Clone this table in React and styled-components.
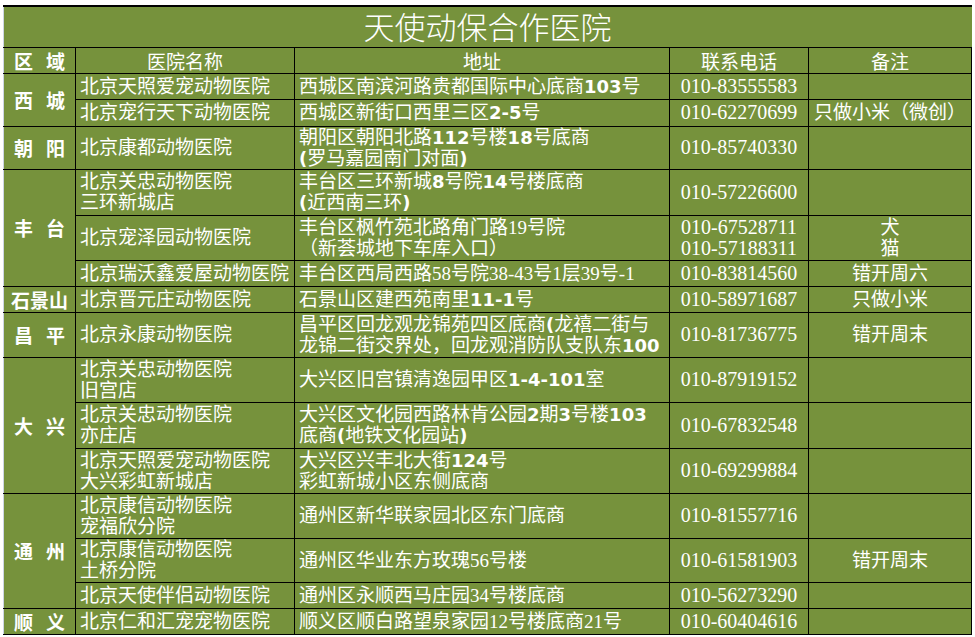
import React from "react";
import styled, { createGlobalStyle } from "styled-components";

const GlobalStyle = createGlobalStyle`
  html, body {
    margin: 0;
    padding: 0;
    background: #fff;
  }
  body {
    width: 975px;
    height: 637px;
    overflow: hidden;
  }
`;

const GREEN = "#76923c";
const GRID = "#cdd5e4";

const Sheet = styled.div`
  padding: 5px 0 0 3px;
  font-family: "Liberation Serif", "Noto Sans CJK SC", serif;
  font-size: 19px;
  color: #fff;
`;

const Table = styled.table`
  border-collapse: collapse;
  table-layout: fixed;
  width: 968px;
  background: ${GREEN};
`;

const Row = styled.tr`
  height: ${(p) => p.$h}px;
`;

const Cell = styled.td`
  border: 1px solid #000;
  padding: 0 4px;
  vertical-align: middle;
  text-align: ${(p) => p.$align || "left"};
  line-height: 21px;
  overflow: hidden;
  white-space: nowrap;
`;

const TitleCell = styled.td`
  border-top: 2px solid #000;
  border-bottom: 1px solid #000;
  border-left: 1px solid ${GRID};
  border-right: 1px solid ${GREEN};
  padding: 0 0 2px;
  text-align: center;
  vertical-align: middle;
  font-family: "Noto Sans CJK SC", sans-serif;
  font-size: 31px;
  font-weight: 300;
  line-height: 30px;
`;

const HeadCell = styled(Cell)`
  text-align: center;
  font-family: "Noto Sans CJK SC", sans-serif;
`;

const RegionCell = styled(Cell)`
  border-left: 1px solid ${GRID};
  padding: 0;
  font-family: "Noto Sans CJK SC", sans-serif;
  font-weight: 700;
`;

// 两字区域名中间留空，三字区域名紧排
const RegionLabel = styled.div`
  display: flex;
  justify-content: center;
  gap: ${(p) => (p.$spaced ? "13px" : "0")};
`;

const Line = styled.div`
  white-space: nowrap;
  overflow: hidden;
`;

const Bold = styled.span`
  font-family: "DejaVu Sans", sans-serif;
  font-weight: 700;
  font-size: 18px;
`;

const Phone = styled.div`
  font-size: 20px;
  line-height: 21px;
`;

const Rich = ({ text }) =>
  text
    .split(/(\{[^}]*\})/)
    .filter(Boolean)
    .map((s, i) =>
      s.startsWith("{") ? (
        <Bold key={i}>{s.slice(1, -1)}</Bold>
      ) : (
        <React.Fragment key={i}>{s}</React.Fragment>
      )
    );

const Region = ({ name }) => (
  <RegionLabel $spaced={name.length === 2}>
    {[...name].map((c, i) => (
      <span key={i}>{c}</span>
    ))}
  </RegionLabel>
);

// 区域 → 医院列表
const districts = [
  {
    name: "西城",
    rows: [
      { h: 26, name: ["北京天照爱宠动物医院"], addr: ["西城区南滨河路贵都国际中心底商{103}号"], phone: ["010-83555583"], note: [] },
      { h: 27, name: ["北京宠行天下动物医院"], addr: ["西城区新街口西里三区{2-5}号"], phone: ["010-62270699"], note: ["只做小米（微创）"] },
    ],
  },
  {
    name: "朝阳",
    rows: [
      { h: 43, name: ["北京康都动物医院"], addr: ["朝阳区朝阳北路{112}号楼{18}号底商", "{(}罗马嘉园南门对面{)}"], phone: ["010-85740330"], note: [] },
    ],
  },
  {
    name: "丰台",
    rows: [
      { h: 46, name: ["北京关忠动物医院", "三环新城店"], addr: ["丰台区三环新城{8}号院{14}号楼底商", "{(}近西南三环{)}"], phone: ["010-57226600"], note: [] },
      { h: 45, name: ["北京宠泽园动物医院"], addr: ["丰台区枫竹苑北路角门路19号院", "（新荟城地下车库入口）"], phone: ["010-67528711", "010-57188311"], note: ["犬", "猫"] },
      { h: 26, name: ["北京瑞沃鑫爱屋动物医院"], addr: ["丰台区西局西路58号院38-43号1层39号-1"], phone: ["010-83814560"], note: ["错开周六"] },
    ],
  },
  {
    name: "石景山",
    rows: [
      { h: 26, name: ["北京晋元庄动物医院"], addr: ["石景山区建西苑南里{11-1}号"], phone: ["010-58971687"], note: ["只做小米"] },
    ],
  },
  {
    name: "昌平",
    rows: [
      { h: 45, name: ["北京永康动物医院"], addr: ["昌平区回龙观龙锦苑四区底商{(}龙禧二街与", "龙锦二街交界处，回龙观消防队支队东{100}"], phone: ["010-81736775"], note: ["错开周末"] },
    ],
  },
  {
    name: "大兴",
    rows: [
      { h: 45, name: ["北京关忠动物医院", "旧宫店"], addr: ["大兴区旧宫镇清逸园甲区{1-4-101}室"], phone: ["010-87919152"], note: [] },
      { h: 46, name: ["北京关忠动物医院", "亦庄店"], addr: ["大兴区文化园西路林肯公园{2}期{3}号楼{103}", "底商{(}地铁文化园站{)}"], phone: ["010-67832548"], note: [] },
      { h: 45, name: ["北京天照爱宠动物医院", "大兴彩虹新城店"], addr: ["大兴区兴丰北大街{124}号", "彩虹新城小区东侧底商"], phone: ["010-69299884"], note: [] },
    ],
  },
  {
    name: "通州",
    rows: [
      { h: 45, name: ["北京康信动物医院", "宠福欣分院"], addr: ["通州区新华联家园北区东门底商"], phone: ["010-81557716"], note: [] },
      { h: 44, name: ["北京康信动物医院", "土桥分院"], addr: ["通州区华业东方玫瑰56号楼"], phone: ["010-61581903"], note: ["错开周末"] },
      { h: 26, name: ["北京天使伴侣动物医院"], addr: ["通州区永顺西马庄园34号楼底商"], phone: ["010-56273290"], note: [] },
    ],
  },
  {
    name: "顺义",
    rows: [
      { h: 26, name: ["北京仁和汇宠宠物医院"], addr: ["顺义区顺白路望泉家园12号楼底商21号"], phone: ["010-60404616"], note: [] },
    ],
  },
];

export default function App() {
  return (
    <>
      <GlobalStyle />
      <Sheet>
        <Table>
          <colgroup>
            <col style={{ width: 72 }} />
            <col style={{ width: 219 }} />
            <col style={{ width: 375 }} />
            <col style={{ width: 139 }} />
            <col style={{ width: 163 }} />
          </colgroup>
          <tbody>
            <Row $h={41}>
              <TitleCell colSpan={5}>天使动保合作医院</TitleCell>
            </Row>
            <Row $h={26}>
              <RegionCell>
                <Region name="区域" />
              </RegionCell>
              <HeadCell>医院名称</HeadCell>
              <HeadCell>地址</HeadCell>
              <HeadCell>联系电话</HeadCell>
              <HeadCell>备注</HeadCell>
            </Row>
            {districts.map((d) =>
              d.rows.map((r, i) => (
                <Row $h={r.h} key={d.name + i}>
                  {i === 0 && (
                    <RegionCell rowSpan={d.rows.length}>
                      <Region name={d.name} />
                    </RegionCell>
                  )}
                  <Cell>
                    {r.name.map((t) => (
                      <Line key={t}>{t}</Line>
                    ))}
                  </Cell>
                  <Cell>
                    {r.addr.map((t) => (
                      <Line key={t}>
                        <Rich text={t} />
                      </Line>
                    ))}
                  </Cell>
                  <Cell $align="center">
                    {r.phone.map((t) => (
                      <Phone key={t}>{t}</Phone>
                    ))}
                  </Cell>
                  <Cell $align="center">
                    {r.note.map((t) => (
                      <Line key={t}>{t}</Line>
                    ))}
                  </Cell>
                </Row>
              ))
            )}
          </tbody>
        </Table>
      </Sheet>
    </>
  );
}
